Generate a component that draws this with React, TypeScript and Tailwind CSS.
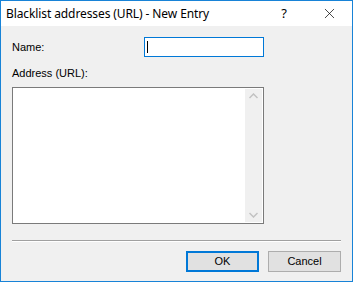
import { X } from "lucide-react";

export default function App() {
  return (
    <div className="w-[353px] h-[282px] flex flex-col border border-[#1883d7] bg-[#f0f0f0] font-['Liberation_Sans',Arial,sans-serif] text-[11px] text-black">
      {/* Title bar */}
      <div className="h-[25px] bg-white flex items-center shrink-0">
        <span className="pl-[5px] text-[12px] font-['Noto_Sans',sans-serif] tracking-[-0.1px]">
          Blacklist addresses (URL) - New Entry
        </span>
        <span className="ml-auto w-[44px] text-center text-[13px] font-['Noto_Sans',sans-serif]">?</span>
        <span className="w-[46px] flex justify-center">
          <X size={17} strokeWidth={1} />
        </span>
      </div>

      {/* Body */}
      <div className="flex-1 px-[11px] pt-[11px] flex flex-col">
        <div className="flex items-center h-[20px]">
          <label className="w-[132px]">Name:</label>
          <div className="w-[120px] h-[20px] border border-[#0078d7] bg-white flex items-center pl-[2px]">
            <span className="w-px h-[12px] bg-black" />
          </div>
        </div>

        <label className="mt-[10px] leading-[13px]">Address (URL):</label>

        <div className="mt-[7px] w-[252px] h-[137px] border border-[#7a7a7a] bg-white flex justify-end p-px">
          <div className="w-[17px] bg-[#f0f0f0] flex flex-col items-center justify-between py-[4px]">
            <svg width="9" height="6" viewBox="0 0 9 6" className="text-[#c2c2c2]">
              <path d="M0.5 5 L4.5 1 L8.5 5" fill="none" stroke="currentColor" strokeWidth="1.5" />
            </svg>
            <svg width="9" height="6" viewBox="0 0 9 6" className="text-[#c2c2c2]">
              <path d="M0.5 1 L4.5 5 L8.5 1" fill="none" stroke="currentColor" strokeWidth="1.5" />
            </svg>
          </div>
        </div>

        <div className="mt-[16px] w-[329px] border-t border-[#a0a0a0] border-b border-b-white" />

        <div className="mt-[9px] flex justify-end gap-[9px] w-[329px]">
          <button className="w-[73px] h-[21px] border-2 border-[#0078d7] bg-[#e1e1e1] text-[11px]">
            OK
          </button>
          <button className="w-[73px] h-[21px] border border-[#adadad] bg-[#e1e1e1] text-[11px]">
            Cancel
          </button>
        </div>
      </div>
    </div>
  );
}
